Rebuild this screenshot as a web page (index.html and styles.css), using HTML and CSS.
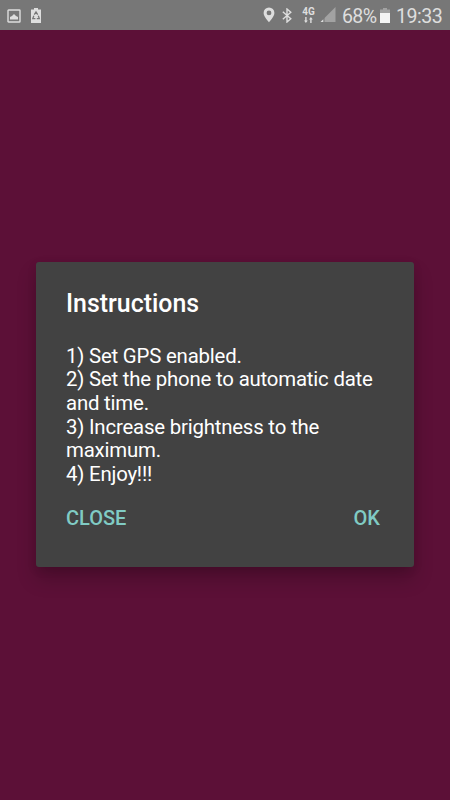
FILE: index.html
```html
<!DOCTYPE html>
<html lang="en">
<head>
<meta charset="utf-8">
<title>Instructions</title>
<link rel="stylesheet" href="styles.css">
</head>
<body>
<div class="screen">
  <header class="status">
    <svg class="picture" width="14" height="14" viewBox="0 0 14 14"><rect x="1" y="1" width="12" height="12" rx=".6" fill="none" stroke="#dedede" stroke-width="1.4"/><path fill="#dedede" d="M3 10.500V8l2-1 2-2 2 2 2 1v2.500z"/></svg>
    <svg class="recycle" width="10" height="15" viewBox="0 0 10 15"><path fill="#dedede" d="M0 1.500h3V0h4v1.500h3V15H0z"/><path fill="none" stroke="#777" stroke-width="1.300" d="M3.300 6.600 5 4l1.700 2.600M7.300 7.800l1 2.800H5.800M4.400 10.600H1.800l1-2.800"/></svg>
    <div class="spacer"></div>
    <svg class="pin" width="12" height="16" viewBox="0 0 12 16"><path fill="#dedede" fill-rule="evenodd" d="M6 .5A5.400 5.400 0 0 0 .6 6C.6 9.700 6 15.300 6 15.300S11.400 9.700 11.400 6A5.400 5.400 0 0 0 6 .5zm0 3a2.400 2.400 0 1 1 0 4.800 2.400 2.400 0 0 1 0-4.800z"/></svg>
    <svg class="bluetooth" width="10" height="15" viewBox="0 0 10 15"><path fill="none" stroke="#dedede" stroke-width="1.400" d="M.8 3.800 8.800 10.700 5 14V1l3.800 3.300-8 6.900"/></svg>
    <div class="network"><span>4G</span><svg width="9" height="6" viewBox="0 0 9 6"><path fill="#dedede" d="M0 3.500h1.200V0h1.400v3.500h1.200L1.900 6zM5 2.500 6.900 0l1.900 2.500H7.600V6H6.200V2.500z"/></svg></div>
    <svg class="signal" width="16" height="16" viewBox="0 0 16 16"><path fill="#a2a2a2" d="M15.500 0v15H.5z"/><path fill="#777" d="M0 8h4.500v8H0z"/><path fill="#dedede" d="M3.300 12.200V15H.5z"/></svg>
    <span class="percent">68%</span>
    <svg class="battery" width="10" height="15" viewBox="0 0 10 15"><path fill="#a2a2a2" d="M0 1.500h3V0h4v1.500h3V5H0z"/><path fill="#f4f4f4" d="M0 5h10v10H0z"/></svg>
    <span class="clock">19:33</span>
  </header>
  <main class="dialog">
    <h1>Instructions</h1>
    <p>1) Set GPS enabled.<br>2) Set the phone to automatic date<br>and time.<br>3) Increase brightness to the<br>maximum.<br>4) Enjoy!!!</p>
    <div class="actions"><button>CLOSE</button><button>OK</button></div>
  </main>
</div>
</body>
</html>
```
FILE: styles.css
```css
* { box-sizing: border-box; }
body { margin: 0; font-family: Roboto, sans-serif; }
.screen { width: 450px; height: 800px; overflow: hidden; background: #5c1037; }
.status { height: 30px; padding: 0 8px 0 7px; display: flex; align-items: center; background: #777; color: #dedede; }
.status svg { display: block; flex: none; }
.picture { margin-top: 1px; }
.recycle { margin-left: 10px; }
.spacer { flex: 1; }
.pin { margin-right: 7px; }
.bluetooth { margin-right: 10px; }
.network { width: 13px; height: 15px; margin-right: 5px; display: flex; flex-direction: column; align-items: center; justify-content: space-between; font-size: 10px; line-height: 8px; font-weight: 700; }
.signal { margin-right: 6px; }
.percent { width: 34px; margin-right: 4px; font-size: 19.600px; line-height: 30px; padding-top: 4px; letter-spacing: -.65px; }
.battery { margin-right: 6px; }
.clock { width: 46px; font-size: 19.600px; line-height: 30px; padding-top: 4px; letter-spacing: -.5px; }
.dialog { width: 378px; height: 305px; margin: 232px 0 0 36px; padding: 27px 34px 0 30px; border-radius: 3px; background: #424242; box-shadow: 0 12px 20px rgba(0, 0, 0, .2), 0 3px 10px rgba(0, 0, 0, .1); }
h1 { margin: 0; color: #fff; font-size: 24.900px; line-height: 30px; font-weight: 500; }
p { margin: 25.600px 0 0; color: #fff; font-size: 20.400px; line-height: 23.700px; letter-spacing: -.2px; white-space: nowrap; }
.actions { margin-top: 19.200px; display: flex; justify-content: space-between; }
button { padding: 0; border: 0; background: none; color: #80cbc4; font: 500 20px/24px Roboto, sans-serif; }
```
